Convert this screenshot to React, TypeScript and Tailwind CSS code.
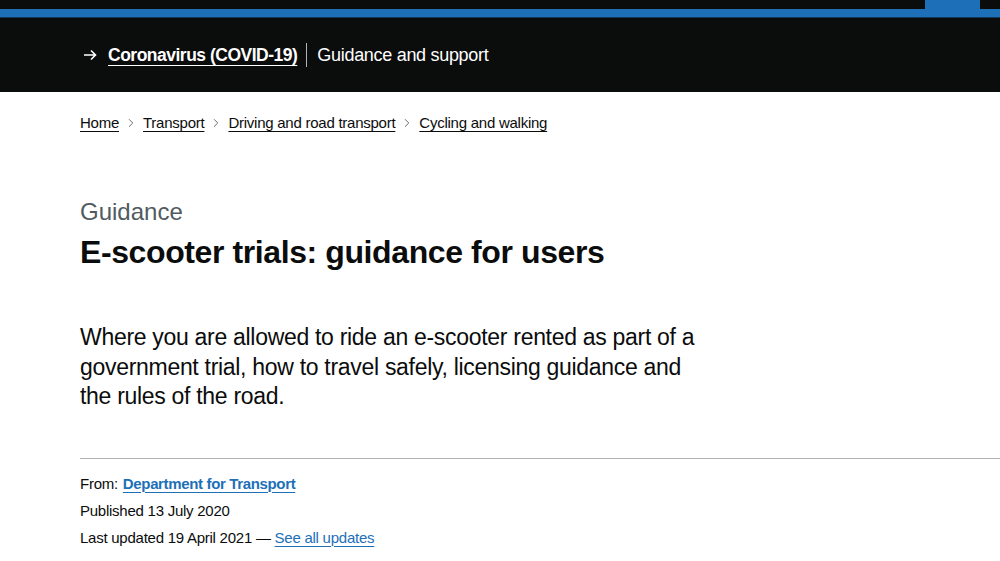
import { ChevronRight } from "lucide-react";

const font = { fontFamily: '"Liberation Sans", Arial, sans-serif' };

const crumbs = ["Home", "Transport", "Driving and road transport", "Cycling and walking"];

const App = () => {
  return (
    <div className="w-[1000px] h-[561px] overflow-hidden bg-white text-[#0b0c0c]" style={font}>
      {/* top strip */}
      <div className="flex h-[9px] bg-[#0b0c0c]">
        <div className="ml-auto mr-[20px] w-[55px] bg-[#1d70b8]" />
      </div>
      <div className="h-[9px] bg-[#1d70b8] border-b border-[#0f385c]" />

      {/* covid banner */}
      <div className="h-[74px] bg-[#0b0c0c] flex items-center pl-[84px]">
        <svg width="13" height="12" viewBox="0 0 13 12" className="mr-[11px]" fill="none" stroke="white" strokeWidth="1.6">
          <path d="M0 6h11.5M7 1.5L11.5 6 7 10.5" />
        </svg>
        <a className="text-white font-bold text-[17.5px] tracking-[-0.5px] underline underline-offset-[4px] decoration-1">
          Coronavirus (COVID-19)
        </a>
        <span className="ml-[9px] mr-[10px] h-[24px] w-px bg-[#b1b4b6]" />
        <span className="text-white text-[18px] tracking-[-0.3px]">Guidance and support</span>
      </div>

      <main className="pl-[80px]">
        {/* breadcrumbs */}
        <nav className="pt-[21px] flex items-center h-[41px] text-[15px] leading-[20px]">
          {crumbs.map((c, i) => (
            <div key={c} className="flex items-center">
              {i > 0 && <ChevronRight className="mx-[5px] h-[14px] w-[14px] text-[#505a5f]" strokeWidth={1.5} />}
              <a className="underline underline-offset-[3px] decoration-1 tracking-[-0.25px]">{c}</a>
            </div>
          ))}
        </nav>

        {/* title */}
        <div className="pt-[64px]">
          <p className="text-[24px] leading-[30px] text-[#505a5f]">Guidance</p>
          <h1 className="mt-[5px] text-[32px] leading-[40px] font-bold tracking-[-0.4px]">
            E-scooter trials: guidance for users
          </h1>
        </div>

        <p className="mt-[51px] text-[23px] leading-[29.5px] tracking-[-0.3px]">
          Where you are allowed to ride an e-scooter rented as part of a
          <br />
          government trial, how to travel safely, licensing guidance and
          <br />
          the rules of the road.
        </p>

        <div className="mt-[46px] h-px bg-[#b1b4b6]" />

        <div className="pt-[11px] text-[15px] leading-[27px] tracking-[-0.25px]">
          <p>
            From:{" "}
            <a className="ml-[1px] font-bold text-[#1d70b8] underline underline-offset-[3px] decoration-1 tracking-[-0.35px]">
              Department for Transport
            </a>
          </p>
          <p>Published 13 July 2020</p>
          <p>
            Last updated 19 April 2021 —{" "}
            <a className="text-[#1d70b8] underline underline-offset-[3px] decoration-1">See all updates</a>
          </p>
        </div>
      </main>
    </div>
  );
};

export default App;
